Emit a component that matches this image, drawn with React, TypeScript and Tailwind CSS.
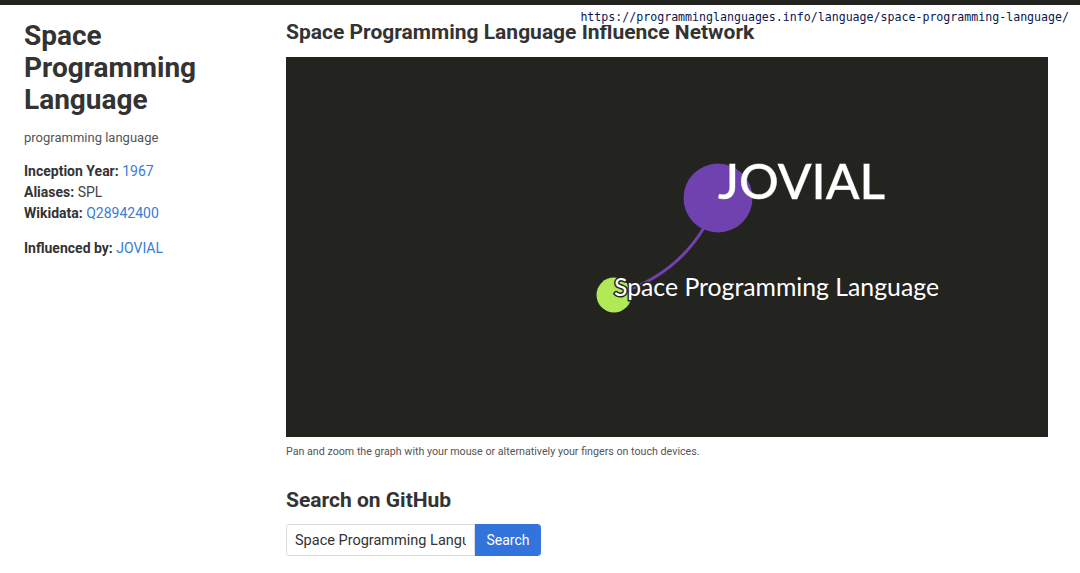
import React from "react";

const sans = { fontFamily: "Roboto, 'Liberation Sans', sans-serif" };

function InfluenceGraph() {
  return (
    <div className="w-[762px] h-[380px] bg-[#23231f] overflow-hidden">
      <svg width="762" height="380" viewBox="0 0 762 380">
        <path d="M 328 238 Q 405 215 432 141" fill="none" stroke="#6f42b0" strokeWidth="3" />
        <circle cx="432" cy="141" r="34.5" fill="#6f42b0" />
        <circle cx="328" cy="238" r="17.5" fill="#b1e855" />
        <text
          x="432"
          y="142"
          fill="#ffffff"
          stroke="#9a9a9a"
          strokeWidth="0.8"
          paintOrder="stroke"
          fontSize="49"
          fontWeight="500"
          textLength="167"
          lengthAdjust="spacingAndGlyphs"
          style={{ fontFamily: "Lato, 'Open Sans', sans-serif" }}
        >
          JOVIAL
        </text>
        <text
          x="328"
          y="239"
          fill="#ffffff"
          stroke="#23231f"
          strokeWidth="3"
          paintOrder="stroke"
          fontSize="24.5"
          textLength="325"
          lengthAdjust="spacingAndGlyphs"
          style={{ fontFamily: "Lato, 'Open Sans', sans-serif" }}
        >
          Space Programming Language
        </text>
      </svg>
    </div>
  );
}

export default function App() {
  return (
    <div className="relative w-[1080px] h-[573px] bg-white text-[#333] overflow-hidden" style={sans}>
      <div className="h-[5px] bg-[#23231f]" />

      {/* URL overlay, sits over the heading like in the reference */}
      <div
        className="absolute top-[9px] right-[10px] bg-white px-[1px] text-[11.6px] leading-[16px] text-[#0a1650]"
        style={{ fontFamily: "'DejaVu Sans Mono', 'Liberation Mono', monospace" }}
      >
        https://programminglanguages.info/language/space-programming-language/
      </div>

      <div className="flex">
        <aside className="w-[262px] shrink-0 pl-6 pr-4">
          <h1 className="mt-[15px] text-[28px] leading-[32px] font-bold text-[#333]">
            Space Programming Language
          </h1>
          <p className="mt-[13px] text-[13px] leading-[18px] text-[#555]">programming language</p>
          <div className="mt-[14px] text-[14px] leading-[21px]">
            <div>
              <span className="font-bold">Inception Year:</span>{" "}
              <a className="text-[#3a7bd5]">1967</a>
            </div>
            <div>
              <span className="font-bold">Aliases:</span> <span className="text-[#444]">SPL</span>
            </div>
            <div>
              <span className="font-bold">Wikidata:</span>{" "}
              <a className="text-[#3a7bd5]">Q28942400</a>
            </div>
          </div>
          <div className="mt-[14px] text-[14px] leading-[21px]">
            <span className="font-bold">Influenced by:</span>{" "}
            <a className="text-[#3a7bd5]">JOVIAL</a>
          </div>
        </aside>

        <main className="w-[762px] shrink-0 ml-6">
          <h2 className="mt-[15px] text-[21px] leading-[24px] font-bold text-[#333]">
            Space Programming Language Influence Network
          </h2>
          <div className="mt-[13px]">
            <InfluenceGraph />
          </div>
          <p className="mt-[8px] text-[10.7px] leading-[14px] text-[#555]">
            Pan and zoom the graph with your mouse or alternatively your fingers on touch devices.
          </p>

          <h2 className="mt-[29px] text-[21px] leading-[24px] font-bold text-[#333]">Search on GitHub</h2>
          <div className="mt-[12px] flex">
            <input
              readOnly
              value="Space Programming Language"
              className="w-[189px] h-[32px] px-2 text-[14.5px] text-[#333] border border-[#dbdbdb] rounded-l-[3px] outline-none"
              style={sans}
            />
            <button className="h-[32px] w-[66px] text-[14px] text-white bg-[#3273dc] rounded-r-[4px]" style={sans}>
              Search
            </button>
          </div>
        </main>
      </div>
    </div>
  );
}
